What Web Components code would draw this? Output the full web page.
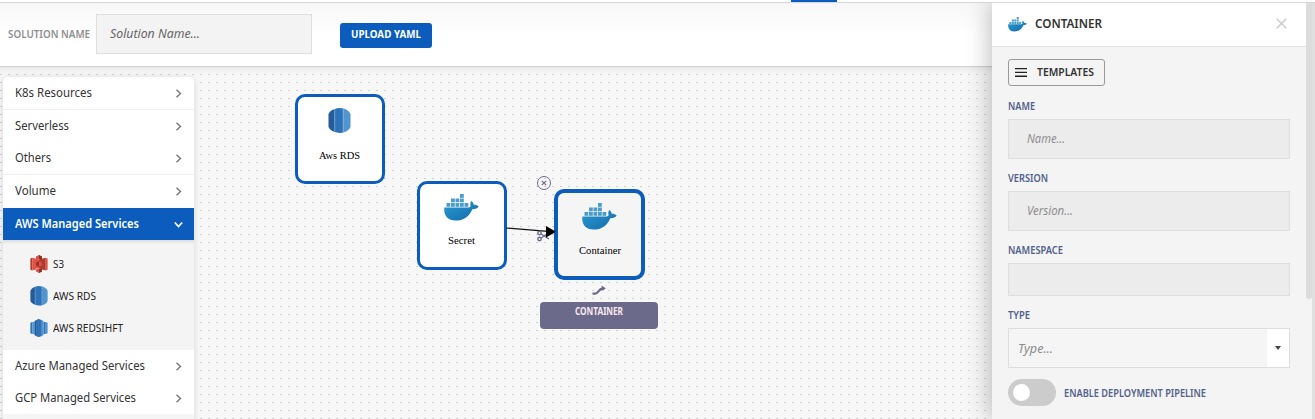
<!DOCTYPE html>
<html lang="en">
<head>
<meta charset="utf-8">
<title>Solution designer</title>
<style>
html,body{margin:0;height:100%;overflow:hidden}
body{font-family:"Noto Sans","Open Sans",sans-serif;background:#f5f5f5}
</style>
</head>
<body>
<solution-app></solution-app>
<script>
const define = (name, html, setup) => customElements.define(name, class extends HTMLElement {
  constructor() {
    super();
    this.attachShadow({mode: 'open'}).innerHTML = html;
  }
  connectedCallback() { if (setup) setup(this, this.shadowRoot); }
});

define('solution-app', `
<style>
:host{display:flex;flex-direction:column;width:1315px;height:419px;overflow:hidden;position:relative;background:#f5f5f5}
.strip{height:2px;background:#fff;border-bottom:1px solid #d6d6d6;display:flex;flex:none;position:relative;z-index:1}
.strip i{margin-left:791px;width:46px;height:2px;background:#0b5cbc}
.body{display:flex;flex:1;min-height:0}
.main{width:992px;display:flex;flex-direction:column}
.rest{width:3px;background:#e0e0e0;position:relative}
config-panel{flex:none}
</style>
<div class="strip"><i></i></div>
<div class="body">
 <div class="main"><tool-bar></tool-bar><flow-canvas></flow-canvas></div>
 <config-panel></config-panel><div class="rest"></div>
</div>`);

define('tool-bar', `
<style>
:host{display:flex;align-items:flex-start;height:63px;flex:none;box-sizing:content-box;border-bottom:1px solid #cfcfcf;background:linear-gradient(#f7f7f7,#fff 32px)}
.label{font-size:11px;font-weight:600;color:#8f8f8f;line-height:16px;margin:23px 0 0 8px;width:88px}
.in{box-sizing:border-box;width:216px;height:40px;margin-top:11px;border:1px solid #dedede;background:#f3f3f3;padding:8px 0 0 13px;font-size:13px;font-style:italic;color:#666;line-height:20px}
.btn{margin:20px 0 0 28px;width:92px;height:25px;border-radius:3px;background:#0b5cbc;color:#fff;font-weight:700;font-size:11px;line-height:21px;box-sizing:border-box;padding-left:11px}
</style>
<div class="label"><fit-text w="82">SOLUTION NAME</fit-text></div>
<div class="in"><fit-text w="90">Solution Name...</fit-text></div>
<div class="btn"><fit-text w="70">UPLOAD YAML</fit-text></div>`);

define('flow-canvas', `
<style>
:host{display:block;flex:1;position:relative;overflow:hidden;background:linear-gradient(rgba(0,0,0,.05),transparent 7px),conic-gradient(from 0deg at 2px 1px,transparent 75%,#cecece 0) 0 7px/8px 8px,#f7f7f7}
resource-list{margin:10px 0 0 3px}
flow-node,.close,.branch,.tag,.edge{position:absolute}
.edge{left:500px;top:150px}
.close{left:537px;top:109px}
.branch{left:591px;top:218px}
.tag{left:540px;top:235px;width:118px;height:27px;border-radius:4px;background:#6b6a8b;color:#f8e9ee;font-weight:700;font-size:10px;line-height:18px;box-sizing:border-box;padding-left:35px}
</style>
<resource-list></resource-list>
<flow-node style="left:295px;top:27px" name="Aws RDS" w="41" icon="rds"></flow-node>
<flow-node style="left:417px;top:113.500px" name="Secret" w="27" icon="docker"></flow-node>
<flow-node style="left:554px;top:122px" name="Container" w="42" icon="docker" selected></flow-node>
<svg class="edge" width="60" height="34"><path d="M6 11 48 14.300" stroke="#111" stroke-width="1.200"/>
<g fill="none" stroke="#6b6a8b" stroke-width="1.400"><circle cx="39.500" cy="16" r="1.700"/><circle cx="39.500" cy="22" r="1.700"/><path d="M41 17 49 22M41 21 49 16"/></g><path d="M46 9 56 14.800 46 20.500 46 14.500z" fill="#000"/></svg>
<svg class="close" width="14" height="14" fill="none" stroke="#6b6a8b"><circle cx="7" cy="7" r="6.500" stroke-width="1"/><path d="M4.800 4.800l4.400 4.400M9.200 4.800 4.800 9.200" stroke-width="1.200"/></svg>
<svg class="branch" width="16" height="11"><path d="M1.500 8.700H4C7.500 8.700 7.500 3.500 12 3.500" fill="none" stroke="#6b6a8b" stroke-width="2.300"/><path d="M10.500 .5 14.800 3.200 11.500 6z" fill="#6b6a8b"/></svg>
<div class="tag"><fit-text w="48">CONTAINER</fit-text></div>`);

define('flow-node', `
<style>
:host{display:flex;flex-direction:column;align-items:center;box-sizing:border-box;width:89.500px;height:89.500px;border:3px solid #0b5cbc;border-radius:10px;background:#fff;padding-top:11px}
:host([icon=docker]){padding-top:10px}
:host([selected]){width:91px;height:91px;border-width:4px;background:#f5f5f5;padding-top:10px}
service-icon{height:26px}
div{font:11px/14px "Liberation Serif",serif;color:#000;margin-top:13.500px}
:host([selected]) div{margin-top:14px}
</style><service-icon></service-icon><div><fit-text></fit-text></div>`, (h, r) => {
  const i = r.querySelector('service-icon'), t = r.querySelector('fit-text');
  i.setAttribute('kind', h.getAttribute('icon')); i.setAttribute('w', h.getAttribute('icon') === 'rds' ? 23 : 35);
  t.setAttribute('w', h.getAttribute('w')); t.textContent = h.getAttribute('name');
});

define('resource-list', `
<style>
:host{display:block;width:191px;height:350px;border-radius:5px 5px 0 0;background:#f5f5f5;box-shadow:0 1px 6px rgba(0,0,0,.14);overflow:hidden;position:relative}
.sub{height:110px;box-sizing:border-box;padding:8px 0 0 26px;background:linear-gradient(#dcdcdc,#f4f4f4 4px);}
.sub div{display:flex;align-items:center;height:32px;font-size:10.500px;color:#222;gap:4px}
.sub service-icon{width:20px;display:flex;justify-content:center}
</style>
<list-row h="33" w="77" line>K8s Resources</list-row>
<list-row h="32" w="54">Serverless</list-row>
<list-row h="33" w="36" line>Others</list-row>
<list-row h="33" w="41">Volume</list-row>
<list-row h="32" w="124" open>AWS Managed Services</list-row>
<div class="sub">
<div><service-icon kind="s3" w="18"></service-icon><fit-text w="11">S3</fit-text></div>
<div><service-icon kind="rds" w="18"></service-icon><fit-text w="43">AWS RDS</fit-text></div>
<div><service-icon kind="redshift" w="18"></service-icon><fit-text w="70">AWS REDSIHFT</fit-text></div>
</div>
<list-row h="32" w="130">Azure Managed Services</list-row>
<list-row h="32" w="121">GCP Managed Services</list-row>`);

define('list-row', `
<style>
:host{display:flex;align-items:center;justify-content:space-between;box-sizing:border-box;padding:0 11px 0 12px;background:#fff;font-size:12.500px;color:#333;border-bottom:0 solid #f0f0f0}
:host([line]){border-bottom-width:1px}
:host([open]){background:#0b5cbc;color:#fff;font-weight:600}
fit-text{margin-top:-2px}
svg{flex:none;fill:none;stroke:#777;stroke-width:1.400}
:host([open]) svg{stroke:#fff;transform:rotate(90deg);stroke-width:1.700}
</style><fit-text><slot></slot></fit-text><svg width="9" height="9"><path d="M2.500 .8 6.500 4.500 2.500 8.200"/></svg>`, (h, r) => {
  h.style.height = h.getAttribute('h') + 'px';
  r.querySelector('fit-text').setAttribute('w', h.getAttribute('w'));
});

define('config-panel', `
<style>
:host{display:flex;width:320px;background:#f4f4f4;position:relative;box-shadow:0 0 24px rgba(0,0,0,.3)}
.col{width:314px}
.bar{width:6px}.bar i{display:block;height:296px;background:#dcdcdc;border-radius:0 0 3px 3px}
header{height:43px;background:#fff;border-bottom:1px solid #e2e2e2;display:flex;align-items:center;box-sizing:content-box;padding:0 19px 0 16px}
header b{font-size:12.500px;font-weight:600;color:#333;margin:-2px auto 0 8px}
header service-icon{margin-top:0}
header svg{margin-top:-3px}
section{padding:12px 16px 0}
.tpl{width:97px;height:27px;box-sizing:border-box;border:1px solid #999;border-radius:3px;display:flex;align-items:center;padding-left:6px;font-size:11px;font-weight:600;color:#333;gap:10px}
.tpl fit-text{margin-top:-2px}
.toggle{display:flex;align-items:center;gap:8px;margin-top:11px;font-size:10px;font-weight:600;color:#52618c}
.toggle i{box-sizing:border-box;width:48px;height:27px;border-radius:14px;background:#ccc;padding:5px}
.toggle i::before{content:"";display:block;width:17px;height:17px;border-radius:50%;background:#fff}
</style>
<div class="col">
<header><service-icon kind="docker" w="19"></service-icon><b><fit-text w="67">CONTAINER</fit-text></b>
<svg width="11" height="11" stroke="#ccc" stroke-width="1.500"><path d="M.8.8 10.200 10.200M10.200.8.8 10.200"/></svg></header>
<section>
<div class="tpl"><svg width="12" height="9" fill="#222"><path d="M0 0h12v1.300H0zM0 3.800h12v1.300H0zM0 7.600h12v1.300H0z"/></svg><fit-text w="57">TEMPLATES</fit-text></div>
<form-field label="NAME" lw="27" text="Name..." tw="38" h="40"></form-field>
<form-field label="VERSION" lw="40" text="Version..." tw="46" h="40"></form-field>
<form-field label="NAMESPACE" lw="55" h="33"></form-field>
<form-field label="TYPE" lw="22" text="Type..." tw="35" h="40" select></form-field>
<div class="toggle"><i></i><fit-text w="142">ENABLE DEPLOYMENT PIPELINE</fit-text></div>
</section></div><div class="bar"><i></i></div>`);

define('form-field', `
<style>
:host{display:block}
.l{height:32px;box-sizing:border-box;padding-top:12px;font-size:10px;line-height:14px;font-weight:600;color:#52618c}
:host([label=NAME]) .l{height:33px;padding-top:13px}
.b{box-sizing:border-box;width:282px;border:1px solid #dedede;background:#ececec;display:flex;align-items:center;padding-left:18px;font-size:12px;font-style:italic;color:#8c8c8c}
.b fit-text{margin-top:-1px}
:host([select]) .b{background:#f5f5f5;padding-left:9px;font-size:13px}
.a{display:none;margin-left:auto;width:22px;align-self:stretch;background:#fff;align-items:center;justify-content:center}
:host([select]) .a{display:flex}
</style><div class="l"><fit-text></fit-text></div><div class="b"><div class="a"><svg width="6" height="4"><path d="M0 0h6L3 4z" fill="#444"/></svg></div></div>`, (h, r) => {
  const l = r.querySelector('.l fit-text'), b = r.querySelector('.b');
  l.setAttribute('w', h.getAttribute('lw')); l.textContent = h.getAttribute('label');
  b.style.height = h.getAttribute('h') + 'px';
  if (h.hasAttribute('text')) {
    const t = document.createElement('fit-text');
    t.setAttribute('w', h.getAttribute('tw')); t.textContent = h.getAttribute('text'); b.prepend(t);
  }
});

const boxes = [[2.5,9],[7,9],[11.5,9],[16,9],[20.5,9],[7,4.5],[11.5,4.5],[16,4.5],[16,0]];
const icons = {
  docker: `<svg viewBox="0 0 35 27"><defs><linearGradient id="g" x1="0" y1="0" x2="1" y2="1"><stop stop-color="#2c9bd0"/><stop offset="1" stop-color="#1269ac"/></linearGradient></defs>
<path fill="url(#g)" d="M.3 13.400H24.500C26 13.200 26.800 12.700 26.500 11.500 25.900 9.700 26.300 8.200 27.600 7 29 8.200 29.700 9.600 29.700 10.800 31.500 10.700 33.500 11.200 34.700 12.600 33.500 14.400 31 15.300 28.300 15.200 25 23 19.500 26.600 11.500 26.600 3.500 26.600-.5 21.500.3 13.400z"/>
<g fill="#4a9dcb">${boxes.map(([x, y]) => `<path d="M${x} ${y}h3.800v3.800h-3.800z"/>`).join('')}</g></svg>`,
  rds: `<svg viewBox="0 0 24 26"><path fill="#245b99" d="M.5 6.500Q1.500 3 7 1v24Q1.500 23 .5 19.500z"/><path fill="#2e73b8" d="M6.500 1.200Q9 0 12 0t4 .5v25Q15 26 12 26t-5.500-1.200z"/><path fill="#5294cf" d="M16 .5Q22.500 2.500 23.500 6.500v13Q22.500 23.500 16 25.500z"/><path d="M7 1v24M15.800.5v25" stroke="#83b2dc" stroke-width=".7"/></svg>`,
  redshift: `<svg viewBox="0 0 24 24"><path fill="#2e73b8" d="M.5 5l2.500-1v16l-2.500-1zM18 4h3v16h-3z"/><path fill="#5294cf" d="M3 4h3v16H3zM21 4l2.500 1v14L21 20z"/><path fill="#245b99" d="M6 2.500 12 0v24l-6-2.500z"/><path fill="#2e73b8" d="M8 1.500 12 0l4 1.500v21L12 24l-4-1.500z"/><path fill="#5294cf" d="m15 1.200 3 1.300v19l-3 1.300z"/></svg>`,
  s3: `<svg viewBox="0 0 24 24"><path fill="#b03a2e" d="M.5 4.500l2.500-1v17l-2.500-1zM12 6l9-2.500v17L12 18z"/><path fill="#e05243" d="M3 3.500l9 2.500v12l-9 2.500zM21 3.500l2.500 1v15l-2.500 1zM12 0l4 2v4.500l-4-1-4 1V2zM12 24l4-2v-4.500l-4 1-4-1V22z"/><path fill="#8c3123" d="M12 0l4 2v4.500l-4-1zM12 24l4-2v-4.500l-4 1zM8.500 9H12v6H8.500z"/><path fill="#e05243" d="M12 9h3.500v6H12z"/></svg>`
};
define('service-icon', `<style>:host{display:block;line-height:0}svg{display:block}</style><span></span>`, (h, r) => {
  const s = r.querySelector('span');
  s.innerHTML = icons[h.getAttribute('kind')] || '';
  if (s.firstChild) s.firstChild.setAttribute('width', h.getAttribute('w'));
});

// Condenses a line of text to the width given in its "w" attribute.
define('fit-text', `<style>:host{display:inline-block;white-space:nowrap;flex:none}span{display:inline-block;transform-origin:0 50%}</style><span><slot></slot></span>`, (h, r) => {
  const s = r.querySelector('span'), w = +h.getAttribute('w');
  const n = s.getBoundingClientRect().width;
  if (w && n) { h.style.width = w + 'px'; s.style.transform = `scaleX(${w / n})`; }
});
</script>
</body>
</html>
